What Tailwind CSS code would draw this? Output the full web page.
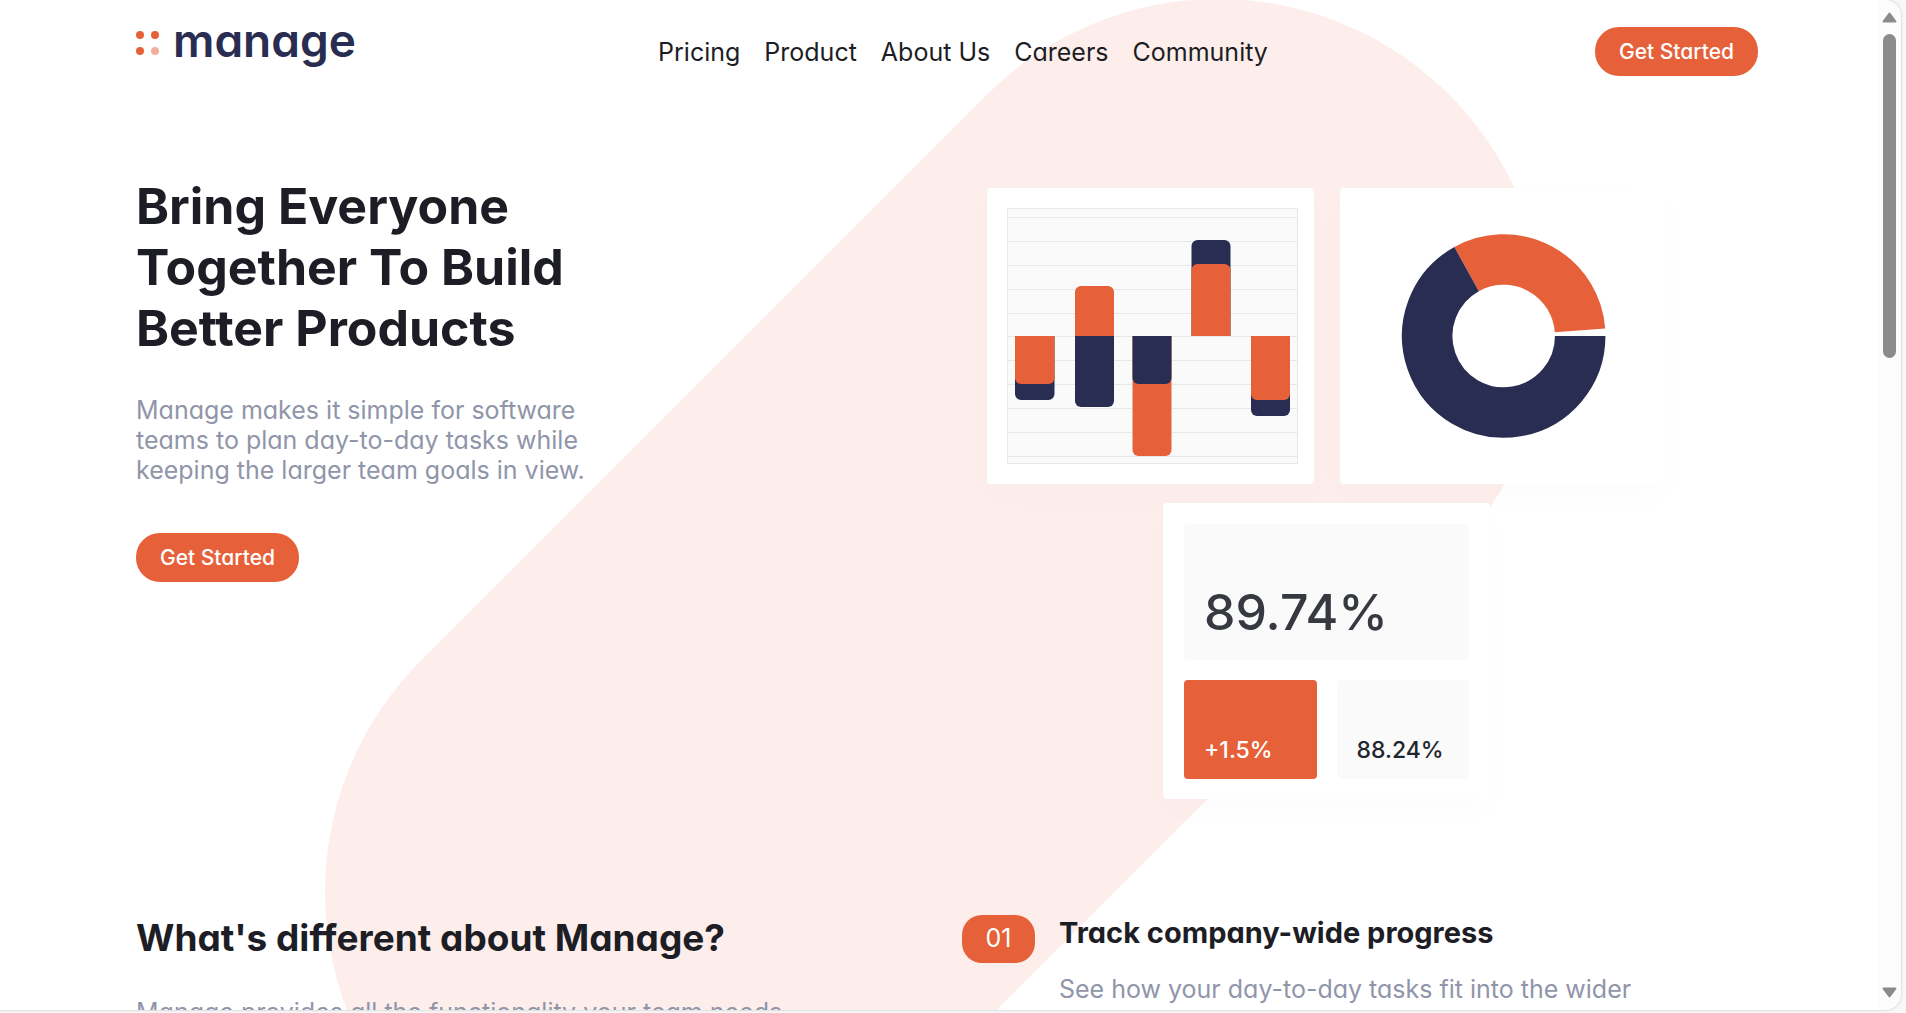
<!DOCTYPE html>
<html lang="en">
<head>
<meta charset="utf-8">
<meta name="viewport" content="width=device-width, initial-scale=1">
<title>Manage</title>
<script src="https://cdn.jsdelivr.net/npm/@tailwindcss/browser@4"></script>
</head>
<body class="h-screen overflow-hidden bg-[#f8f8f8] pr-[5px] pb-[3px] font-['Inter',sans-serif] text-[#1d1e25] [font-feature-settings:'cv11']">
<div class="relative flex h-full overflow-hidden rounded-r-2xl bg-white shadow-[0_0_2px_1px_#dcdcdc]">

  <!-- Slanted pill behind the page -->
  <svg class="absolute left-[325px] top-0" width="1220" height="1220" viewBox="0 0 1220 1220" aria-hidden="true">
    <path d="M893 326 327 892" stroke="#fdeeeb" stroke-width="654" stroke-linecap="round"/>
  </svg>

  <div class="relative min-w-0 flex-1 overflow-hidden pr-[120px] pl-[136px]">
    <header class="flex items-center pt-[27px]">
      <a href="#" aria-label="manage" class="flex h-[49px] w-[219px] items-start gap-[14px]">
        <svg class="mt-1 shrink-0" width="23" height="25" viewBox="0 0 23 25" aria-hidden="true">
          <g fill="#e6613a"><circle cx="4" cy="4" r="4"/><circle cx="19" cy="4" r="4"/><circle cx="4" cy="20" r="4"/><circle cx="19" cy="20" r="4" opacity=".5"/></g>
        </svg>
        <span class="-mt-[15px] text-[46px] leading-[56px] font-semibold text-[#292d52]">manage</span>
      </a>
      <nav class="mx-auto flex gap-6 pr-6 text-[25px] leading-[30px]">
        <a href="#">Pricing</a><a href="#">Product</a><a href="#">About Us</a><a href="#">Careers</a><a href="#">Community</a>
      </nav>
      <button class="h-[49px] w-[163px] rounded-3xl bg-[#e6613a] text-[21px] font-medium text-white">Get Started</button>
    </header>

    <main>
      <section class="grid grid-cols-2 gap-[30px] pt-[100px]">
        <div>
          <h1 class="text-[50px] leading-[61px] font-bold">Bring Everyone<br>Together To Build<br>Better Products</h1>
          <p class="mt-[36px] text-[25px] leading-[30px] text-[#9095a9]">Manage makes it simple for software<br>teams to plan day-to-day tasks while<br>keeping the larger team goals in view.</p>
          <button class="mt-[48px] h-[49px] w-[163px] rounded-3xl bg-[#e6613a] text-[21px] font-medium text-white">Get Started</button>
        </div>

        <div class="flex w-[729px] flex-wrap justify-center gap-x-[26px] gap-y-[19px] pt-3">
          <div class="h-[296px] w-[327px] rounded-[4px] bg-white shadow-[0_12px_40px_rgba(36,45,82,0.015)]">
            <svg width="327" height="296" viewBox="0 0 327 296" role="img" aria-label="Bar chart">
              <rect x="20.500" y="20.500" width="290" height="255" fill="#fafafa" stroke="#e5e8e8"/>
              <path d="M20 29.500H310M20 53.500H310M20 77.500H310M20 101.500H310M20 125.500H310M20 148.500H310M20 172.500H310M20 196.500H310M20 220.500H310M20 244.500H310M20 268.500H310" stroke="#e5e8e8"/>
              <g fill="#292d52">
                <path d="M28 148h39.500v58a6 6 0 0 1-6 6H34a6 6 0 0 1-6-6z"/>
                <path d="M88 148h39v65a6 6 0 0 1-6 6H94a6 6 0 0 1-6-6z"/>
                <path d="M204.500 148V58a6 6 0 0 1 6-6h27a6 6 0 0 1 6 6v90z"/>
                <path d="M264 148h39v74a6 6 0 0 1-6 6h-27a6 6 0 0 1-6-6z"/>
              </g>
              <g fill="#e6613a">
                <path d="M28 148h39.500v42a6 6 0 0 1-6 6H34a6 6 0 0 1-6-6z"/>
                <path d="M88 148v-44a6 6 0 0 1 6-6h27a6 6 0 0 1 6 6v44z"/>
                <path d="M145.500 148h39v114a6 6 0 0 1-6 6h-27a6 6 0 0 1-6-6z"/>
                <path d="M204.500 148V82a6 6 0 0 1 6-6h27a6 6 0 0 1 6 6v66z"/>
                <path d="M264 148h39v58a6 6 0 0 1-6 6h-27a6 6 0 0 1-6-6z"/>
              </g>
              <path d="M145.500 148h39v42a6 6 0 0 1-6 6h-27a6 6 0 0 1-6-6z" fill="#292d52"/>
            </svg>
          </div>
          <div class="h-[296px] w-[327px] rounded-[4px] bg-white shadow-[0_12px_40px_rgba(36,45,82,0.015)]">
            <svg width="327" height="296" viewBox="0 0 327 296" fill="none" stroke-width="50.500" role="img" aria-label="Donut chart">
              <path d="M126.600 81.100A76.500 76.500 0 0 1 240 142.300" stroke="#e6613a"/>
              <path d="M240.200 148A76.500 76.500 0 1 1 126.600 81.100" stroke="#292d52"/>
            </svg>
          </div>
          <div class="grid h-[296px] w-[327px] grid-cols-2 grid-rows-[136px_99px] gap-5 rounded-[4px] bg-white px-[21px] pt-[21px] font-medium shadow-[0_12px_40px_rgba(36,45,82,0.015)]">
            <div class="col-span-2 flex items-end rounded-[4px] bg-[#fafafa] px-5 pb-[18px] text-[50px] leading-[60px] text-[#363a40]">89.74%</div>
            <div class="flex items-end rounded-[4px] bg-[#e6613a] px-5 pb-[14px] text-[23px] leading-[30px] text-white">+1.5%</div>
            <div class="flex items-end rounded-[4px] bg-[#fafafa] px-5 pb-[14px] text-[23px] leading-[30px] text-[#1f262d]">88.24%</div>
          </div>
        </div>
      </section>

      <section class="grid grid-cols-2 gap-[30px] pt-[116px]">
        <div>
          <h2 class="text-[37px] leading-[46px] font-bold">What's different about Manage?</h2>
          <p class="mt-[36px] text-[25px] leading-[30px] whitespace-nowrap text-[#9095a9]">Manage provides all the functionality your team needs</p>
        </div>
        <div class="flex items-start gap-6">
          <span class="flex h-12 w-[73px] shrink-0 items-center justify-center rounded-[20px] bg-[#e6613a] text-[25px] text-white">01</span>
          <div>
            <h3 class="text-[29px] leading-[36px] font-bold">Track company-wide progress</h3>
            <p class="mt-[23px] text-[25px] leading-[30px] whitespace-nowrap text-[#9095a9]">See how your day-to-day tasks fit into the wider</p>
          </div>
        </div>
      </section>
    </main>
  </div>

  <!-- Scroll bar -->
  <div class="relative flex w-[23px] shrink-0 flex-col items-center bg-[#fcfcfc] py-3" aria-hidden="true">
    <svg width="15" height="11" viewBox="0 0 15 11"><path d="M7.500 1.500 13.500 9.500H1.500z" fill="#8b8b8b" stroke="#8b8b8b" stroke-width="2" stroke-linejoin="round"/></svg>
    <div class="mt-[11px] h-[324px] w-[13px] rounded-full bg-[#8b8b8b]"></div>
    <svg class="mt-auto" width="15" height="11" viewBox="0 0 15 11"><path d="M7.500 9.500 13.500 1.500H1.500z" fill="#8b8b8b" stroke="#8b8b8b" stroke-width="2" stroke-linejoin="round"/></svg>
  </div>
</div>
</body>
</html>
